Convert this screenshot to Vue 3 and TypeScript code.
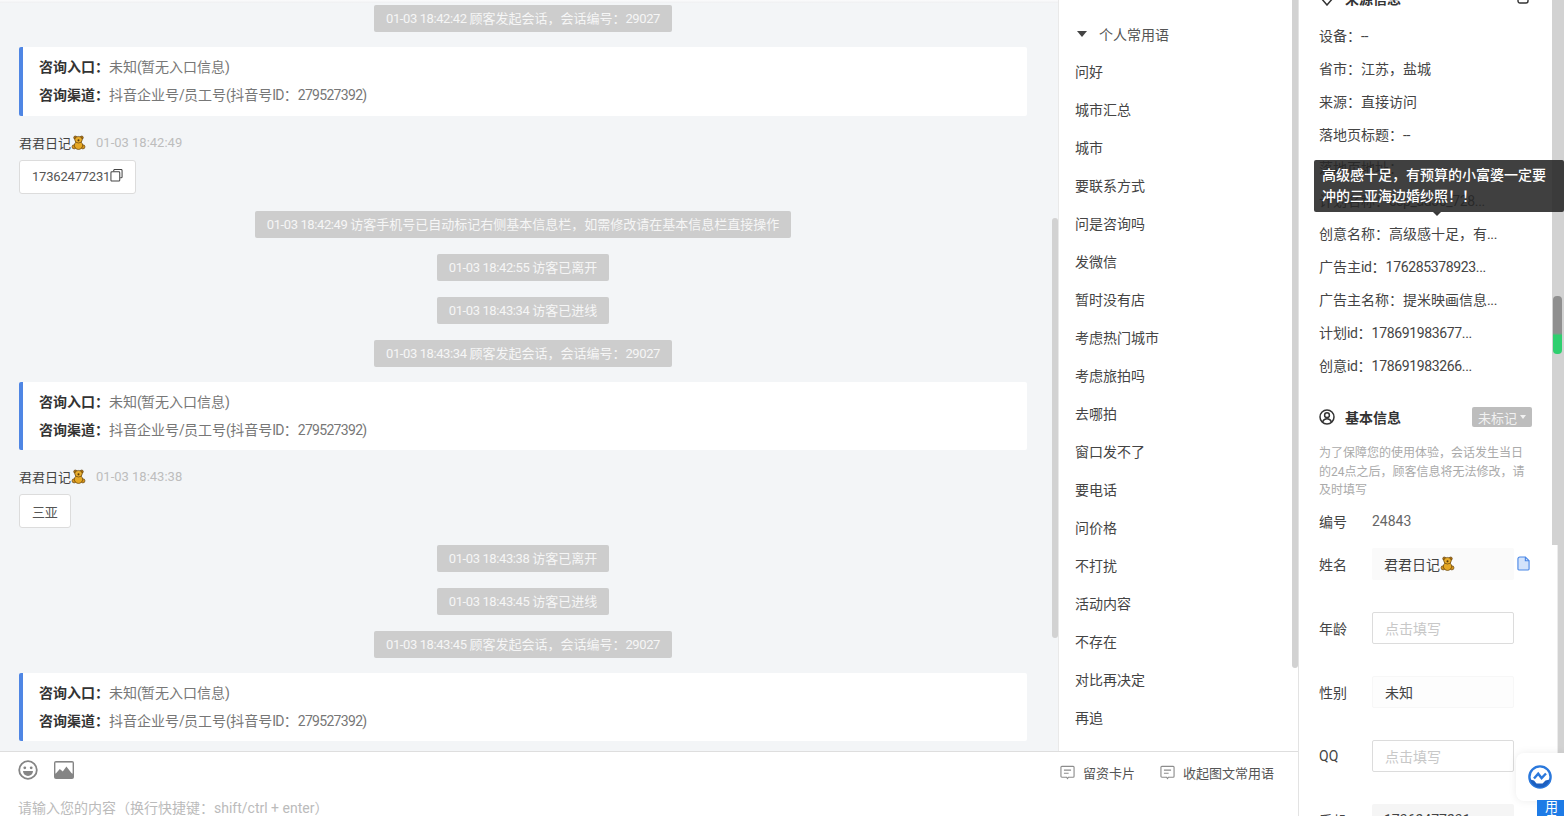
<script setup lang="ts">
type ChatItem =
  | { kind: 'notice'; text: string }
  | { kind: 'card' }
  | { kind: 'msg'; time: string; text: string; copy?: boolean }

// full-width punctuation, same as the product copy
const C = '\uFF0C'
const K = '\uFF1A'

const sessionStart = (time: string) => `01-03 ${time} 顾客发起会话${C}会话编号${K}29027`

const items: ChatItem[] = [
  { kind: 'notice', text: sessionStart('18:42:42') },
  { kind: 'card' },
  { kind: 'msg', time: '01-03 18:42:49', text: '17362477231', copy: true },
  { kind: 'notice', text: `01-03 18:42:49 访客手机号已自动标记右侧基本信息栏${C}如需修改请在基本信息栏直接操作` },
  { kind: 'notice', text: '01-03 18:42:55 访客已离开' },
  { kind: 'notice', text: '01-03 18:43:34 访客已进线' },
  { kind: 'notice', text: sessionStart('18:43:34') },
  { kind: 'card' },
  { kind: 'msg', time: '01-03 18:43:38', text: '三亚' },
  { kind: 'notice', text: '01-03 18:43:38 访客已离开' },
  { kind: 'notice', text: '01-03 18:43:45 访客已进线' },
  { kind: 'notice', text: sessionStart('18:43:45') },
  { kind: 'card' },
]

const cardLines = [
  { label: `咨询入口${K}`, value: '未知(暂无入口信息)' },
  { label: `咨询渠道${K}`, value: `抖音企业号/员工号(抖音号ID${K}279527392)` },
]

const phrases = [
  '问好', '城市汇总', '城市', '要联系方式', '问是咨询吗', '发微信', '暂时没有店', '考虑热门城市',
  '考虑旅拍吗', '去哪拍', '窗口发不了', '要电话', '问价格', '不打扰', '活动内容', '不存在', '对比再决定', '再追',
]

const sourceRows = [
  `设备${K}--`,
  `省市${K}江苏${C}盐城`,
  `来源${K}直接访问`,
  `落地页标题${K}--`,
  `落地页地址${K}`,
  `计划名称${K}ccp_ad36_728...`,
  `创意名称${K}高级感十足${C}有...`,
  `广告主id${K}176285378923...`,
  `广告主名称${K}提米映画信息...`,
  `计划id${K}178691983677...`,
  `创意id${K}178691983266...`,
]

const hint = `为了保障您的使用体验${C}会话发生当日的24点之后${C}顾客信息将无法修改${C}请及时填写`
const tooltip = `高级感十足${C}有预算的小富婆一定要冲的三亚海边婚纱照\uFF01\uFF01`
const placeholder = `请输入您的内容\uFF08换行快捷键${K}shift/ctrl + enter\uFF09`

const isLatin = (run: string) => /^[\x20-\x7e]+$/.test(run)
const runs = (text: string) => text.split(/([\x20-\x7e]+)/).filter(Boolean)
</script>

<template>
  <div class="page">
    <svg class="defs" width="0" height="0">
      <defs>
        <symbol id="bear" viewBox="0 0 16 16">
          <circle cx="4.6" cy="2.8" r="1.7" fill="#b9770e" stroke="#5a3a08" stroke-width=".7" />
          <circle cx="11.4" cy="2.8" r="1.7" fill="#b9770e" stroke="#5a3a08" stroke-width=".7" />
          <ellipse cx="3.4" cy="12.6" rx="2.3" ry="2.2" fill="#d8951a" stroke="#5a3a08" stroke-width=".7" />
          <ellipse cx="12.6" cy="12.6" rx="2.3" ry="2.2" fill="#d8951a" stroke="#5a3a08" stroke-width=".7" />
          <ellipse cx="8" cy="11" rx="4.4" ry="4.4" fill="#e5a825" stroke="#5a3a08" stroke-width=".7" />
          <ellipse cx="8" cy="5" rx="4" ry="3.5" fill="#e8ad2c" stroke="#5a3a08" stroke-width=".7" />
          <circle cx="8" cy="5.7" r="1.1" fill="#5a3a08" />
        </symbol>
        <symbol id="note" viewBox="0 0 16 16">
          <path d="M2 1.5h12a1 1 0 0 1 1 1v9.5a1 1 0 0 1-1 1H9l-1 1.5-1-1.5H2a1 1 0 0 1-1-1V2.5a1 1 0 0 1 1-1z" fill="none" stroke="#8c8c8c" stroke-width="1.2" />
          <path d="M4.2 5.5h7.6M4.2 8.8h5" stroke="#8c8c8c" stroke-width="1.2" />
        </symbol>
      </defs>
    </svg>

    <div class="workspace">
      <div class="upper">
        <main class="chat">
          <div class="top-shade"></div>
          <template v-for="(item, i) in items" :key="i">
            <div v-if="item.kind === 'notice'" class="notice-row">
              <span class="notice"><span v-for="(r, j) in runs(item.text)" :key="j" :class="{ latin: isLatin(r) }">{{ r }}</span></span>
            </div>
            <div v-else-if="item.kind === 'card'" class="card">
              <div v-for="line in cardLines" :key="line.label" class="card-line">
                <b>{{ line.label }}</b><span v-for="(r, j) in runs(line.value)" :key="j" :class="{ latin: isLatin(r) }">{{ r }}</span>
              </div>
            </div>
            <div v-else class="msg">
              <div class="msg-head">
                <span class="msg-name">君君日记</span>
                <svg class="bear"><use href="#bear" /></svg>
                <span class="msg-time">{{ item.time }}</span>
              </div>
              <div class="bubble" :class="{ tall: item.copy }">
                {{ item.text }}
                <svg v-if="item.copy" class="bubble-copy" viewBox="0 0 14 14">
                  <path d="M4 2.5V1.5a1 1 0 0 1 1-1h7a1 1 0 0 1 1 1v7a1 1 0 0 1-1 1h-1" fill="none" stroke="#444" stroke-width="1.1" />
                  <rect x="1" y="3" width="9.5" height="10" rx="1" fill="none" stroke="#444" stroke-width="1.1" />
                </svg>
              </div>
            </div>
          </template>
          <div class="bar chat-bar"></div>
        </main>

        <aside class="phrases">
          <div class="phrase-head"><i class="caret"></i>个人常用语</div>
          <div v-for="p in phrases" :key="p" class="phrase">{{ p }}</div>
          <div class="bar phrase-bar"></div>
        </aside>
      </div>

      <footer class="composer">
        <div class="tools">
          <div class="tool-left">
            <svg class="tool-icon" viewBox="0 0 20 20">
              <circle cx="10" cy="10" r="8.8" fill="none" stroke="#858585" stroke-width="1.8" />
              <circle cx="6.8" cy="7.8" r="1.4" fill="#858585" />
              <circle cx="13.2" cy="7.8" r="1.4" fill="#858585" />
              <path d="M5 11h10a5 5 0 0 1-10 0z" fill="#858585" />
            </svg>
            <svg class="tool-icon" viewBox="0 0 20 18">
              <rect x="0" y="0" width="20" height="18" rx="2" fill="#858585" />
              <rect x="1.4" y="1.6" width="17.2" height="11" fill="#fff" />
              <path d="M1.4 13l4.4-5 3 2.6 3.6-5.2 5.8 7.6V15H1.4z" fill="#858585" />
            </svg>
          </div>
          <div class="tool-right">
            <span class="tool-btn"><svg class="note"><use href="#note" /></svg>留资卡片</span>
            <span class="tool-btn"><svg class="note"><use href="#note" /></svg>收起图文常用语</span>
          </div>
        </div>
        <div class="placeholder">{{ placeholder }}</div>
      </footer>
    </div>

    <aside class="side">
      <div class="side-body">
        <div class="section-head source-head">
          <svg class="section-icon" viewBox="0 0 16 16">
            <path d="M8 15L2 8a4 4 0 0 1 6-5 4 4 0 0 1 6 5z" fill="none" stroke="#333" stroke-width="1.5" />
          </svg>
          <span>来源信息</span>
          <svg class="source-corner" viewBox="0 0 12 12">
            <rect x="1" y="1" width="10" height="10" rx="2" fill="none" stroke="#333" stroke-width="1.4" />
          </svg>
        </div>
        <div v-for="row in sourceRows" :key="row" class="source-row">
          <span v-for="(r, j) in runs(row)" :key="j" :class="{ latin: isLatin(r) }">{{ r }}</span>
        </div>

        <div class="section-head basic-head">
          <svg class="section-icon" viewBox="0 0 16 16">
            <circle cx="8" cy="8" r="7" fill="none" stroke="#333" stroke-width="1.5" />
            <circle cx="8" cy="6.2" r="2.4" fill="none" stroke="#333" stroke-width="1.5" />
            <path d="M3.6 13c.8-2.4 2.4-3.2 4.4-3.2s3.6.8 4.4 3.2" fill="none" stroke="#333" stroke-width="1.5" />
          </svg>
          <span>基本信息</span>
          <span class="tag">未标记<i class="tag-caret"></i></span>
        </div>
        <p class="hint">{{ hint }}</p>

        <div class="id-row"><span class="label">编号</span><span class="id-value">24843</span></div>

        <div class="form-row">
          <span class="label">姓名</span>
          <div class="field filled">君君日记<svg class="bear"><use href="#bear" /></svg></div>
          <svg class="doc" viewBox="0 0 14 16">
            <path d="M3 1h6l4 4v9a1 1 0 0 1-1 1H2a1 1 0 0 1-1-1V3a2 2 0 0 1 2-2z" fill="#d3e3fb" stroke="#4a87e6" stroke-width="1.2" />
            <path d="M9 1v4h4" fill="none" stroke="#4a87e6" stroke-width="1.2" />
          </svg>
        </div>
        <div class="form-row">
          <span class="label">年龄</span>
          <div class="field empty">点击填写</div>
        </div>
        <div class="form-row">
          <span class="label">性别</span>
          <div class="field plain">未知</div>
        </div>
        <div class="form-row">
          <span class="label">QQ</span>
          <div class="field empty">点击填写</div>
        </div>
        <div class="form-row">
          <span class="label">手机</span>
          <div class="field filled phone">17362477231</div>
        </div>
      </div>

      <div class="bar side-bar-top"></div>
      <div class="bar side-bar-bottom"></div>
      <div class="side-thumb"></div>

      <div class="tooltip">
        {{ tooltip }}
        <i class="tooltip-arrow"></i>
      </div>

      <div class="float-logo">
        <svg viewBox="0 0 24 24" width="24" height="24">
          <circle cx="12" cy="12" r="10.6" fill="none" stroke="#2a78dc" stroke-width="2.4" />
          <path d="M2.2 14.5a10 10 0 0 0 19.6 0l-4.3 1-3 3H8.5l-2.5-3z" fill="#1c5fc0" />
          <path d="M6 13.5l4.2-4.8 3.4 4.4 4.4-4.6" fill="none" stroke="#2a78dc" stroke-width="2.4" />
        </svg>
      </div>
      <div class="float-tab">用户</div>
    </aside>
  </div>
</template>

<style>
html,
body {
  margin: 0;
  overflow: hidden;
  background: #fff;
}
</style>

<style scoped>
.page {
  display: flex;
  width: 1564px;
  height: 816px;
  overflow: hidden;
  background: #fff;
  color: #333;
  font-family: Roboto, "Noto Sans CJK SC", sans-serif;
  font-size: 14px;
}

.defs {
  position: absolute;
}

.workspace {
  display: flex;
  flex-direction: column;
  width: 1298px;
  height: 816px;
  flex: none;
}

.upper {
  display: flex;
  height: 751px;
  flex: none;
}

.chat {
  position: relative;
  width: 1059px;
  flex: none;
  box-sizing: border-box;
  padding: 5px 31px 0 19px;
  overflow: hidden;
  background: #f3f5f7;
  border-right: 1px solid #e9e9e9;
}

.top-shade {
  position: absolute;
  top: 0;
  left: 0;
  right: 0;
  height: 3px;
  background: linear-gradient(#fbfbfc, #eff0f2);
}

.notice-row {
  display: flex;
  justify-content: center;
  margin-bottom: 16px;
}

.notice-row:has(+ .card) {
  margin-bottom: 15px;
}

.notice {
  height: 27px;
  line-height: 27px;
  padding: 0 12px;
  background: #cdcdcd;
  border-radius: 2px;
  color: #f6f6f6;
  font-size: 13px;
  white-space: nowrap;
}

.notice .latin {
  letter-spacing: -0.4px;
}

.card {
  box-sizing: border-box;
  height: 68.5px;
  padding: 6px 16px;
  margin-bottom: 17px;
  background: #fff;
  border-left: 4px solid #4f86e4;
  border-radius: 2px;
  color: #777;
}

.card-line {
  height: 28px;
  line-height: 28px;
}

.card-line b {
  color: #333;
  font-weight: 700;
}

.card-line .latin {
  letter-spacing: -0.7px;
}

.msg {
  margin-bottom: 16.5px;
}

.msg-head {
  display: flex;
  align-items: center;
  height: 19.5px;
  margin-bottom: 7.5px;
  font-size: 13px;
}

.msg-name {
  color: #444;
}

.bear {
  width: 15px;
  height: 15px;
  flex: none;
}

.msg-time {
  margin-left: 10px;
  color: #bdbdbd;
}

.bubble {
  display: flex;
  width: fit-content;
  align-items: center;
  box-sizing: border-box;
  height: 34px;
  padding: 0 12px;
  background: #fff;
  border: 1px solid #dcdcdc;
  border-radius: 3px;
  color: #555;
  font-size: 13px;
  letter-spacing: -0.2px;
}

.bubble.tall {
  height: 34.5px;
}

.bubble-copy {
  width: 13px;
  height: 13px;
  margin-top: -2px;
}

.bar {
  position: absolute;
  background: #d2d2d2;
}

.chat-bar {
  right: 0;
  top: 218px;
  width: 6px;
  height: 420px;
  border-radius: 3px;
}

.phrases {
  position: relative;
  flex: 1;
  padding: 0 0 0 16px;
  overflow: hidden;
}

.phrase-head {
  display: flex;
  align-items: center;
  height: 20px;
  margin-top: 24px;
  margin-bottom: 9px;
  color: #555;
}

.caret {
  width: 0;
  height: 0;
  margin: 0 12px 0 2px;
  border-left: 5px solid transparent;
  border-right: 5px solid transparent;
  border-top: 6px solid #444;
}

.phrase {
  height: 38px;
  line-height: 38px;
  color: #444;
}

.phrase-bar {
  right: 0;
  top: 0;
  width: 6px;
  height: 668px;
  border-radius: 0 0 3px 3px;
}

.composer {
  flex: 1;
  border-top: 1px solid #dedede;
  box-sizing: border-box;
}

.tools {
  display: flex;
  justify-content: space-between;
  align-items: center;
  height: 36px;
  padding: 0 24px 0 18px;
}

.tool-left {
  display: flex;
  align-items: center;
  gap: 16px;
}

.tool-icon {
  width: 20px;
  height: 20px;
  flex: none;
}

.tool-right {
  display: flex;
  gap: 25px;
  margin-top: 4px;
  font-size: 13px;
  color: #555;
}

.tool-btn {
  display: inline-flex;
  align-items: center;
}

.note {
  width: 15px;
  height: 15px;
  margin-right: 8px;
}

.placeholder {
  padding: 10px 0 0 18px;
  line-height: 20px;
  color: #bbb;
}

.side {
  position: relative;
  flex: 1;
  border-left: 1px solid #e3e3e3;
  overflow: hidden;
}

.side-body {
  padding: 0 0 0 20px;
}

.section-head {
  display: flex;
  align-items: center;
  height: 22px;
  font-weight: 700;
  color: #333;
}

.source-head {
  margin-top: -13px;
  margin-bottom: 11px;
}

.basic-head {
  margin-top: 23px;
  width: 213px;
}

.section-icon {
  width: 16px;
  height: 16px;
  margin-right: 10px;
  flex: none;
}

.source-corner {
  width: 12px;
  height: 12px;
  margin-left: 116px;
}

.source-row {
  height: 33px;
  line-height: 33px;
  color: #444;
  white-space: nowrap;
}

.source-row .latin {
  letter-spacing: -0.35px;
}

.tag {
  display: inline-flex;
  align-items: center;
  justify-content: center;
  width: 60px;
  height: 20px;
  margin-left: auto;
  background: #bdbdbd;
  color: #f2f2f2;
  font-size: 13px;
  font-weight: 400;
  border-radius: 2px;
}

.tag-caret {
  width: 0;
  height: 0;
  margin-left: 3px;
  border-left: 3px solid transparent;
  border-right: 3px solid transparent;
  border-top: 4px solid #f2f2f2;
}

.hint {
  width: 212px;
  margin: 16px 0 0;
  font-size: 12px;
  line-height: 18.5px;
  color: #aaa;
}

.id-row {
  display: flex;
  align-items: center;
  height: 22px;
  margin-top: 10px;
  margin-bottom: 16px;
}

.label {
  width: 53px;
  flex: none;
  color: #444;
}

.id-value {
  color: #666;
}

.form-row {
  display: flex;
  align-items: center;
  height: 32px;
  margin-bottom: 32px;
}

.field {
  display: flex;
  align-items: center;
  box-sizing: border-box;
  width: 142px;
  height: 32px;
  padding: 0 12px;
  flex: none;
  border-radius: 2px;
}

.filled {
  background: #fafafa;
  color: #444;
}

.plain {
  background: #fdfdfd;
  border: 1px solid #f7f7f7;
  color: #444;
}

.empty {
  border: 1px solid #dcdcdc;
  color: #c8c8c8;
}

.phone {
  background: #f5f5f5;
}

.doc {
  width: 13px;
  height: 15px;
  margin-left: 3px;
}

.side-bar-top {
  top: 0;
  right: 0;
  width: 12px;
  height: 545px;
}

.side-bar-bottom {
  top: 545px;
  right: 0;
  width: 6px;
  height: 271px;
  border-left: 1px solid #ececec;
}

.side-thumb {
  position: absolute;
  top: 296px;
  right: 2px;
  width: 9px;
  height: 58px;
  border-radius: 4px;
  background: linear-gradient(#8f8f8f 0 64%, #2fcf6f 68% 100%);
}

.tooltip {
  position: absolute;
  top: 160px;
  left: 15px;
  box-sizing: border-box;
  width: 250px;
  height: 52px;
  padding: 5px 8px;
  background: rgba(38, 38, 38, 0.88);
  border-radius: 2px;
  color: #fff;
  font-size: 14px;
  font-weight: 500;
  line-height: 21px;
}

.tooltip-arrow {
  position: absolute;
  left: 119px;
  bottom: -4px;
  width: 0;
  height: 0;
  border-left: 4px solid transparent;
  border-right: 4px solid transparent;
  border-top: 4px solid #3a3a3a;
}

.float-logo {
  position: absolute;
  top: 753px;
  right: 0;
  display: flex;
  align-items: center;
  justify-content: center;
  width: 48px;
  height: 48px;
  background: #fff;
  border-radius: 8px 0 0 8px;
  box-shadow: 0 0 8px rgba(0, 0, 0, 0.08);
}

.float-tab {
  position: absolute;
  top: 800px;
  right: 0;
  width: 27px;
  height: 40px;
  background: #1e7be6;
  color: #fff;
  font-size: 13px;
  line-height: 27px;
  writing-mode: vertical-rl;
}
</style>
